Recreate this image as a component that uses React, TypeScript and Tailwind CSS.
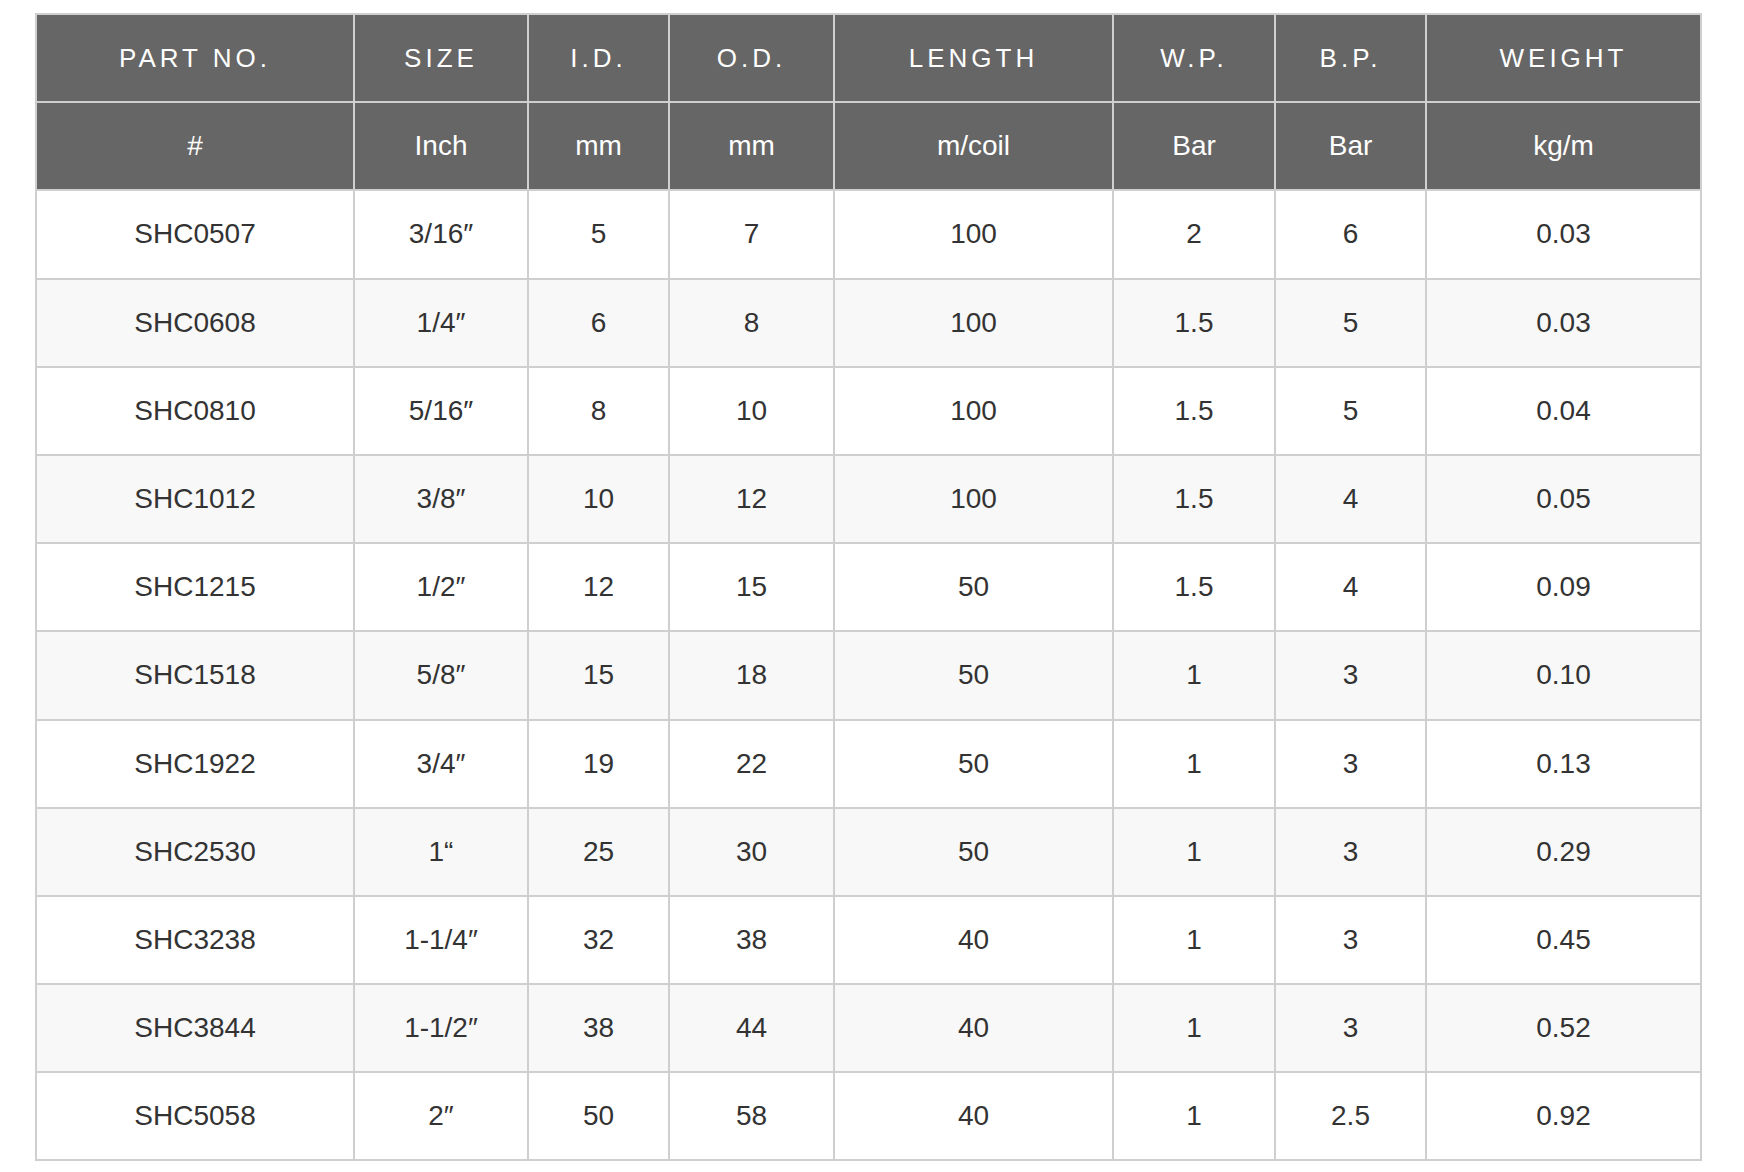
type Row = [string, string, string, string, string, string, string, string]

const HEAD_TOP: string[] = ["PART NO.", "SIZE", "I.D.", "O.D.", "LENGTH", "W.P.", "B.P.", "WEIGHT"]
const HEAD_UNITS: string[] = ["#", "Inch", "mm", "mm", "m/coil", "Bar", "Bar", "kg/m"]

const ROWS: Row[] = [
  ["SHC0507", "3/16″", "5", "7", "100", "2", "6", "0.03"],
  ["SHC0608", "1/4″", "6", "8", "100", "1.5", "5", "0.03"],
  ["SHC0810", "5/16″", "8", "10", "100", "1.5", "5", "0.04"],
  ["SHC1012", "3/8″", "10", "12", "100", "1.5", "4", "0.05"],
  ["SHC1215", "1/2″", "12", "15", "50", "1.5", "4", "0.09"],
  ["SHC1518", "5/8″", "15", "18", "50", "1", "3", "0.10"],
  ["SHC1922", "3/4″", "19", "22", "50", "1", "3", "0.13"],
  ["SHC2530", "1“", "25", "30", "50", "1", "3", "0.29"],
  ["SHC3238", "1-1/4″", "32", "38", "40", "1", "3", "0.45"],
  ["SHC3844", "1-1/2″", "38", "44", "40", "1", "3", "0.52"],
  ["SHC5058", "2″", "50", "58", "40", "1", "2.5", "0.92"],
]

const cell = "border-2 border-[#cfcfcf] h-[88.2px] text-center align-middle p-0"

const App = () => {
  return (
    <div className="min-h-screen bg-white pl-[35px] pt-[13px] font-['Liberation_Sans',Arial,sans-serif]">
      <table className="table-fixed border-collapse w-[1665px] text-[28px]">
        <colgroup>
          <col className="w-[318px]" />
          <col className="w-[174px]" />
          <col className="w-[141px]" />
          <col className="w-[165px]" />
          <col className="w-[279px]" />
          <col className="w-[162px]" />
          <col className="w-[151px]" />
          <col className="w-[275px]" />
        </colgroup>
        <thead className="bg-[#666666] text-white">
          <tr>
            {HEAD_TOP.map(h => (
              <th key={h} className={`${cell} font-normal text-[26px] tracking-[4px]`}>
                {h}
              </th>
            ))}
          </tr>
          <tr>
            {HEAD_UNITS.map((u, i) => (
              <th key={`u${i}`} className={`${cell} font-normal`}>
                {u}
              </th>
            ))}
          </tr>
        </thead>
        <tbody className="text-[#333333]">
          {ROWS.map((r, idx) => (
            <tr key={r[0]} className={idx % 2 === 0 ? "bg-white" : "bg-[#f8f8f8]"}>
              {r.map((v, i) => (
                <td key={`${r[0]}-${i}`} className={cell}>
                  {v}
                </td>
              ))}
            </tr>
          ))}
        </tbody>
      </table>
    </div>
  )
}

export default App
